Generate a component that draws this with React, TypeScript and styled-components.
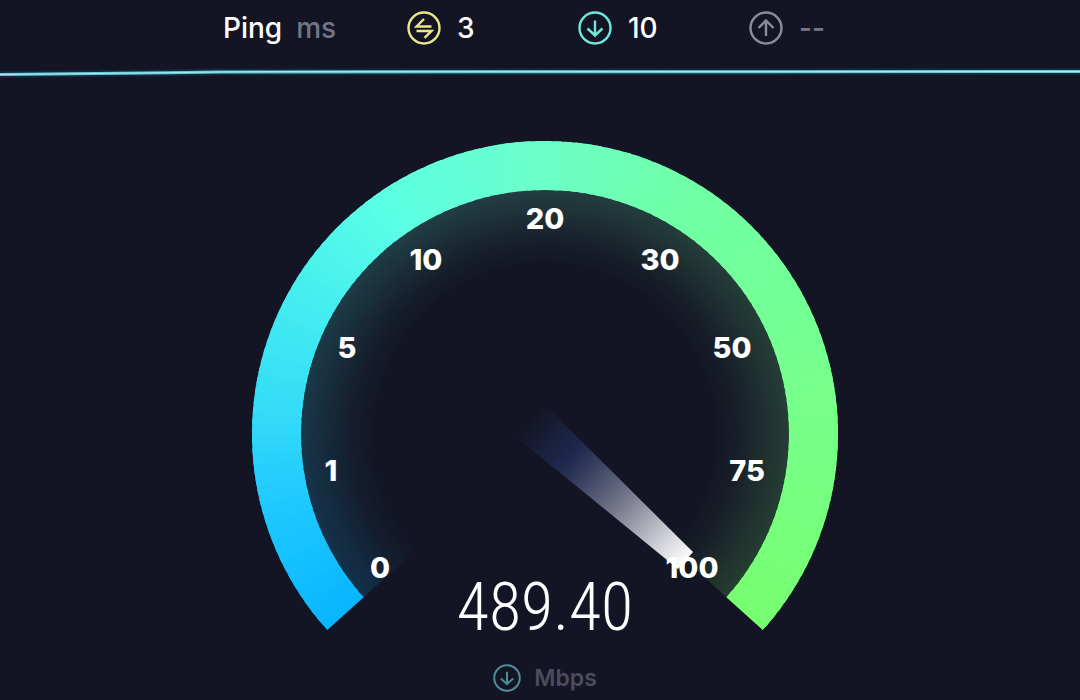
import React from "react";
import styled, { createGlobalStyle } from "styled-components";

const GlobalStyle = createGlobalStyle`
  * { box-sizing: border-box; }
  body {
    margin: 0;
    background: #141524;
    color: #fff;
    font-family: Inter, "Open Sans", sans-serif;
  }
`;

const Page = styled.div`
  display: flex;
  flex-direction: column;
  min-height: 100vh;
  overflow: hidden;
`;

const Stats = styled.header`
  display: grid;
  grid-template-columns: 184px 171px 171px 108px;
  justify-content: center;
  align-items: center;
  height: 56px;
`;

const Stat = styled.div<{ $muted?: boolean }>`
  display: flex;
  align-items: center;
  gap: 16px;
  font-size: 28px;
  line-height: 32px;
  font-weight: 500;
  color: ${(p) => (p.$muted ? "#77788a" : "#fff")};
`;

const StatTitle = styled(Stat)`
  gap: 14px;
`;

const StatUnit = styled.span`
  color: #747486;
`;

const TraceLine = styled.svg`
  display: block;
  width: 100%;
  height: 28px;
`;

const Meter = styled.main`
  display: grid;
  justify-items: center;
  padding: 56px 0 0 10px;
`;

const Dial = styled.svg`
  grid-area: 1 / 1;
  width: 600px;
  max-width: 100%;
  height: auto;
  margin-bottom: 60px;
`;

const Readout = styled.section`
  grid-area: 1 / 1;
  align-self: end;
  display: flex;
  flex-direction: column;
  align-items: center;
  gap: 16px;
`;

const Speed = styled.output`
  font-family: "Roboto Condensed", "Open Sans Condensed", "Liberation Sans Narrow", Roboto, sans-serif;
  font-weight: 300;
  font-size: 66px;
  line-height: 80px;
`;

const Unit = styled.div`
  display: flex;
  align-items: center;
  gap: 13px;
  font-size: 23px;
  line-height: 28px;
  font-weight: 600;
  color: #4b4c5c;
`;

const TickLabel = styled.text`
  font-size: 29px;
  font-weight: 800;
  fill: #fff;
  text-anchor: middle;
`;

type IconProps = { kind: "ping" | "down" | "up"; color: string; size?: number };

const ICON_PATHS = {
  ping: "M17 8L9.5 15.5H24.5M9.5 20H24.5L17.5 26.8",
  down: "M17 9.5V24M9.5 17.5L17 24.5L24.5 17.5",
  up: "M17 25V10M9.5 17L17 9.5L24.5 17",
};

function CircleIcon({ kind, color, size = 34 }: IconProps) {
  return (
    <svg width={size} height={size} viewBox="0 0 34 34" fill="none" stroke={color} strokeWidth="2.4" aria-hidden="true">
      <circle cx="17" cy="17" r="15.5" />
      <path d={ICON_PATHS[kind]} />
    </svg>
  );
}

const CX = 300;
const CY = 294;
const START = 138;
const SWEEP = 264;
const STEPS = 132;

const STOPS: [number, number[]][] = [
  [0, [8, 182, 255]],
  [0.1, [30, 200, 255]],
  [0.17, [50, 218, 248]],
  [0.27, [68, 238, 240]],
  [0.37, [92, 255, 228]],
  [0.5, [108, 255, 200]],
  [0.62, [112, 255, 165]],
  [0.8, [118, 255, 140]],
  [1, [118, 255, 112]],
];

function colorAt(t: number) {
  const i = Math.max(1, STOPS.findIndex(([s]) => s >= t));
  const [a, ca] = STOPS[i - 1];
  const [b, cb] = STOPS[i];
  const k = (t - a) / (b - a);
  return `rgb(${ca.map((v, n) => Math.round(v + (cb[n] - v) * k)).join(",")})`;
}

function point(r: number, t: number) {
  const rad = ((START + SWEEP * t) * Math.PI) / 180;
  return `${(CX + r * Math.cos(rad)).toFixed(2)} ${(CY + r * Math.sin(rad)).toFixed(2)}`;
}

function band(inner: number, outer: number, from: number, to: number, large = 0) {
  return `M${point(outer, from)}A${outer} ${outer} 0 ${large} 1 ${point(outer, to)}L${point(inner, to)}A${inner} ${inner} 0 ${large} 0 ${point(inner, from)}Z`;
}

function Sweep({ inner, outer }: { inner: number; outer: number }) {
  return (
    <>
      {Array.from({ length: STEPS }, (_, i) => (
        <path
          key={i}
          d={band(inner, outer, i / STEPS, Math.min(1, (i + 1.6) / STEPS))}
          fill={colorAt((i + 0.5) / STEPS)}
        />
      ))}
    </>
  );
}

const TICKS: [string, number, number][] = [
  ["0", 135, 438],
  ["1", 86, 341],
  ["5", 102, 218],
  ["10", 181, 130],
  ["20", 300, 89],
  ["30", 415, 130],
  ["50", 487, 218],
  ["75", 502, 341],
  ["100", 447, 438],
];

function Gauge() {
  return (
    <Dial viewBox="0 0 600 492" role="img" aria-label="Download speed gauge">
      <defs>
        <radialGradient id="fade" gradientUnits="userSpaceOnUse" cx={CX} cy={CY} r="245">
          <stop offset="0.68" stopColor="#fff" stopOpacity="0" />
          <stop offset="0.78" stopColor="#fff" stopOpacity="0.04" />
          <stop offset="0.9" stopColor="#fff" stopOpacity="0.12" />
          <stop offset="1" stopColor="#fff" stopOpacity="0.18" />
        </radialGradient>
        <mask id="glow" maskUnits="userSpaceOnUse" x="0" y="0" width="600" height="492">
          <path d={band(150, 245, 0, 1, 1)} fill="url(#fade)" />
        </mask>
        <linearGradient id="needle" gradientUnits="userSpaceOnUse" x1="289" y1="276" x2="443" y2="420">
          <stop offset="0" stopColor="#20305e" stopOpacity="0" />
          <stop offset="0.26" stopColor="#222d58" stopOpacity="0.8" />
          <stop offset="0.6" stopColor="#7b7c8e" />
          <stop offset="0.85" stopColor="#d0d0d8" />
          <stop offset="1" stopColor="#fff" />
        </linearGradient>
      </defs>
      <g mask="url(#glow)">
        <Sweep inner={150} outer={245} />
      </g>
      <Sweep inner={244} outer={293} />
      <path d="M299 264L448 412L433 429L270 296Z" fill="url(#needle)" />
      {TICKS.map(([label, x, y]) => (
        <TickLabel key={label} x={x} y={y}>
          {label}
        </TickLabel>
      ))}
    </Dial>
  );
}

const TRACE = "M0 18.5C90 17.5 150 17 220 16S400 15.5 1080 15.5";

export default function App() {
  return (
    <Page>
      <GlobalStyle />
      <Stats>
        <StatTitle>
          <span>Ping</span>
          <StatUnit>ms</StatUnit>
        </StatTitle>
        <Stat>
          <CircleIcon kind="ping" color="#ece787" />
          <span>3</span>
        </Stat>
        <Stat>
          <CircleIcon kind="down" color="#6ee8dc" />
          <span>10</span>
        </Stat>
        <Stat $muted>
          <CircleIcon kind="up" color="#8b8b9c" />
          <span>--</span>
        </Stat>
      </Stats>
      <TraceLine viewBox="0 0 1080 28" preserveAspectRatio="none" fill="none" aria-hidden="true">
        <path d={TRACE} stroke="#0d3448" strokeWidth="7" opacity="0.6" />
        <path d={TRACE} stroke="#69cbd8" strokeWidth="3" />
        <path d={TRACE} stroke="#a5e9ee" strokeWidth="1" />
      </TraceLine>
      <Meter>
        <Gauge />
        <Readout>
          <Speed>489.40</Speed>
          <Unit>
            <CircleIcon kind="down" color="#4f8d98" size={28} />
            <span>Mbps</span>
          </Unit>
        </Readout>
      </Meter>
    </Page>
  );
}
